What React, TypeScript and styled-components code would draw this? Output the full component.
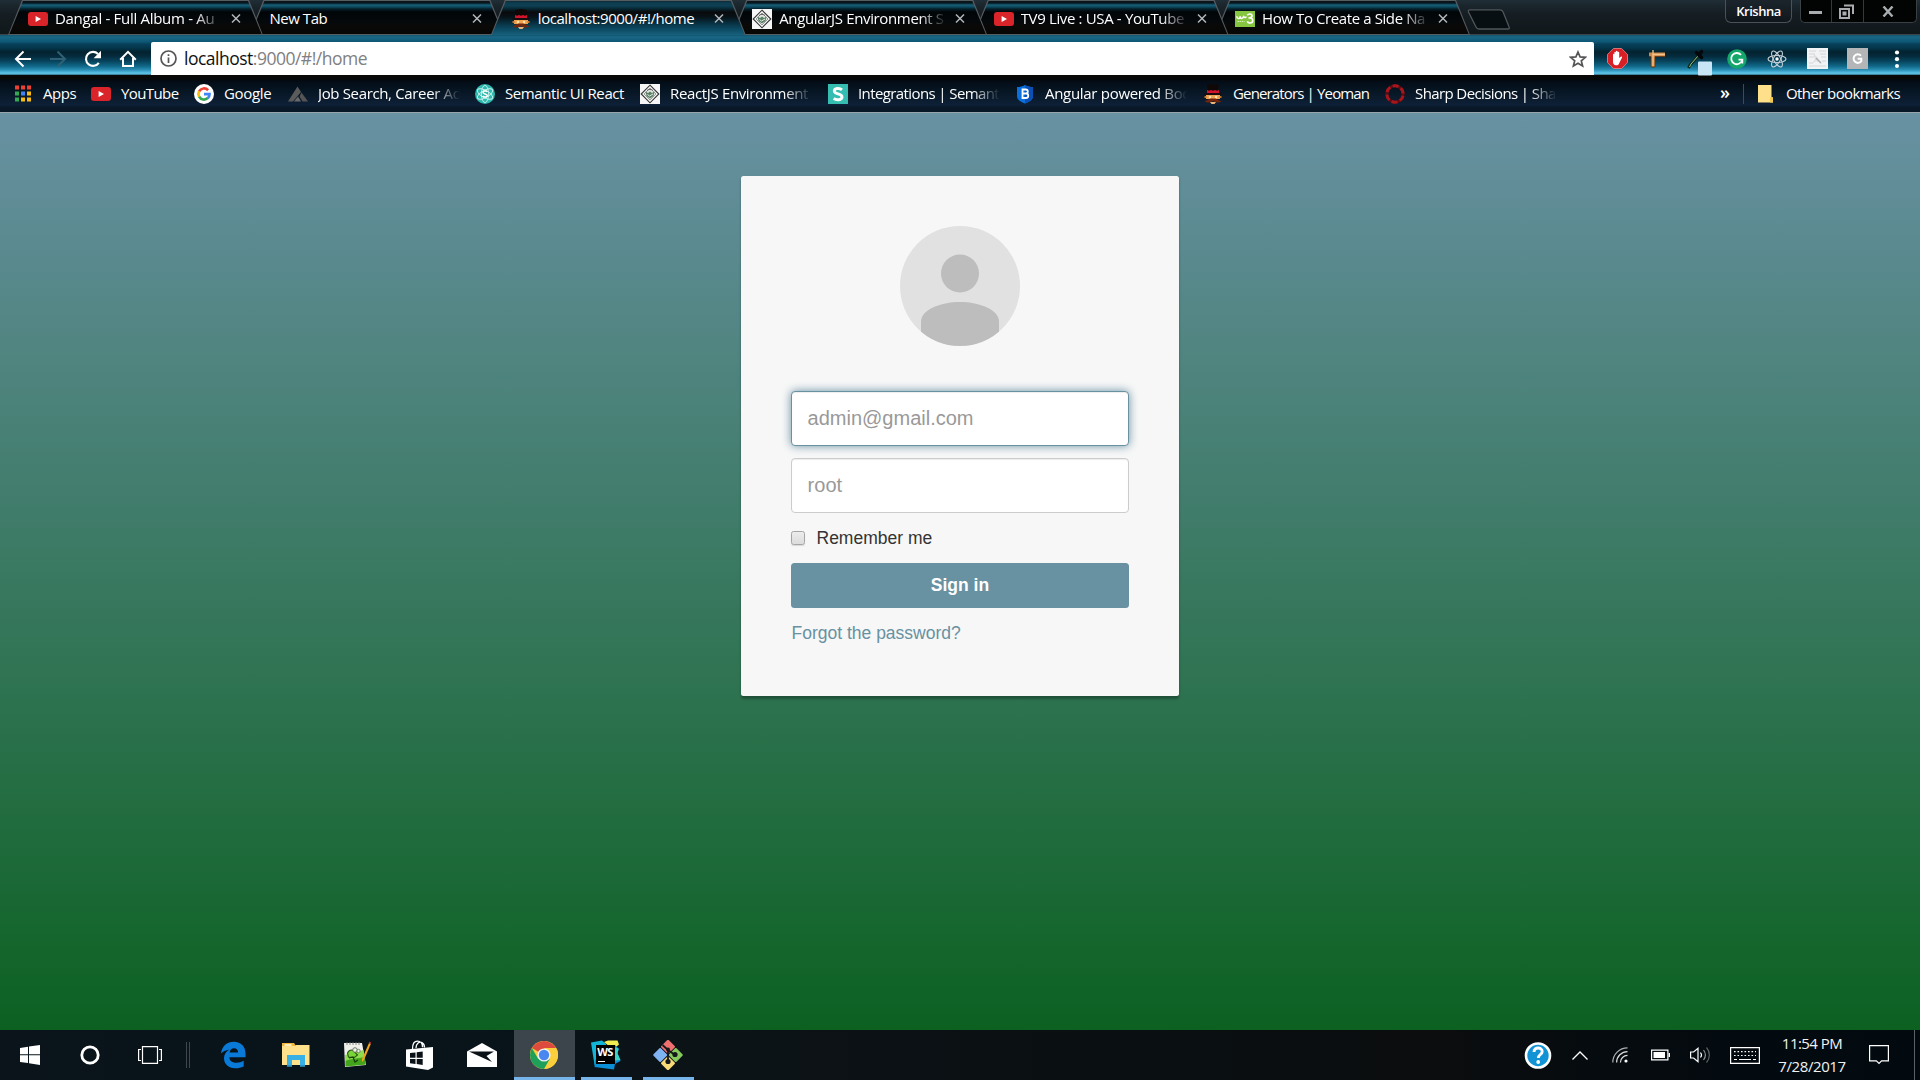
import React from "react";
import styled, { createGlobalStyle, css } from "styled-components";

const GlobalStyle = createGlobalStyle`
  * { box-sizing: border-box; }
  html, body { margin: 0; padding: 0; }
  body { overflow: hidden; background: #0a1218; }
  svg { display: block; flex: none; }
`;

const uiFont = `"Segoe UI", "Open Sans", "Noto Sans", sans-serif`;
const pageFont = `Arial, "Liberation Sans", sans-serif`;

const Screen = styled.div`
  width: 1920px;
  height: 1080px;
  display: flex;
  flex-direction: column;
  font-family: ${uiFont};
  color: #fff;
`;

/* ---------- tab strip ---------- */

const TabStrip = styled.div`
  height: 35px;
  flex: none;
  display: flex;
  align-items: flex-start;
  padding-left: 8px;
  background: linear-gradient(#202e37 0, #1a252c 6px, #161e23 14px, #10171b 35px);
  position: relative;
  box-shadow: inset 0 -1px 0 #3d4447;
`;

const Tab = styled.div<{ $active?: boolean; $z: number }>`
  width: 255px;
  height: 35px;
  flex: none;
  margin-right: -13.6px;
  position: relative;
  z-index: ${(p) => p.$z};
  display: flex;
  align-items: center;
  gap: 7px;
  padding: 3px 21px 0 20px;
  background: #565c60;
  clip-path: polygon(14px 0, 241px 0, 255px 35px, 0 35px);

  &::before {
    content: "";
    position: absolute;
    inset: 0;
    z-index: -1;
    clip-path: ${(p) =>
      p.$active
        ? "polygon(15px 1px, 240px 1px, 254px 35px, 1px 35px)"
        : "polygon(15px 1px, 240px 1px, 253.6px 34px, 1.4px 34px)"};
    background: ${(p) =>
      p.$active
        ? "linear-gradient(#10222b 0, #0c3d50 3px, #0e3f52 6px, #072632 9px, #0a0a0c 12px, #071218 17px, #083040 23px, #0c4a62 29px, #17607c 35px)"
        : "linear-gradient(#0b1419 0, #07161d 3px, #17607a 5px, #0d475d 7px, #051f2a 9px, #010507 12px, #05090b 22px, #0a0907 26px, #060606 35px)"};
  }
`;

const fade = css`
  mask-image: linear-gradient(90deg, #000 calc(100% - 28px), transparent 100%);
`;

const TabTitle = styled.span<{ $fade?: boolean; $ls?: number }>`
  flex: 1;
  min-width: 0;
  white-space: nowrap;
  font-size: 15px;
  line-height: 22px;
  margin-top: -2px;
  letter-spacing: ${(p) => p.$ls ?? -0.35}px;
  ${(p) => p.$fade && fade}
`;

const CloseX = () => (
  <svg width="12" height="12" viewBox="0 0 12 12" stroke="#b4b8ba" strokeWidth="1.5">
    <path d="M2 1.500 10 9.500M10 1.500 2 9.500" />
  </svg>
);

const NewTab = styled.svg`
  margin: 9px 0 0 11px;
`;

const WindowArea = styled.div`
  position: absolute;
  top: 0;
  right: 3px;
  display: flex;
  gap: 8px;
`;

const UserChip = styled.div`
  width: 67px;
  height: 23px;
  border: 1px solid #4a5258;
  border-top: 0;
  border-radius: 0 0 6px 6px;
  background: linear-gradient(#1c252c, #10171c);
  font-size: 13px;
  font-weight: 600;
  letter-spacing: -0.5px;
  line-height: 22px;
  text-align: center;
`;

const Controls = styled.div`
  width: 117px;
  height: 23px;
  display: grid;
  grid-template-columns: 30px 32px 1fr;
  border: 1px solid #394147;
  border-top: 0;
  border-radius: 0 0 5px 5px;
  background: #020303;
`;

const Control = styled.div<{ $shift?: number }>`
  display: flex;
  align-items: center;
  justify-content: center;
  padding-right: ${(p) => p.$shift ?? 0}px;
  & + & {
    border-left: 1px solid #33393e;
  }
`;

/* ---------- toolbar ---------- */

const Toolbar = styled.div`
  height: 40px;
  flex: none;
  display: flex;
  align-items: center;
  padding-left: 5px;
  background: linear-gradient(
    #0f5570 0,
    #1a6884 2px,
    #14617f 4px,
    #0c5674 7px,
    #07405a 9px,
    #04364b 13px,
    #03222f 17px,
    #052a3b 21px,
    #07435c 26px,
    #0f6686 31px,
    #2b90b5 35px,
    #5cc2e6 38px,
    #57b9db 39px,
    #2b5465 40px
  );
`;

const ToolButton = styled.div<{ $w?: number }>`
  width: ${(p) => p.$w ?? 35}px;
  height: 40px;
  flex: none;
  display: flex;
  align-items: center;
  justify-content: center;
  padding-top: 7px;
`;

const AddressBar = styled.div`
  width: 1443px;
  height: 33px;
  flex: none;
  align-self: flex-end;
  margin: 0 3px 0 6px;
  display: flex;
  align-items: center;
  padding: 0 7px 0 9px;
  gap: 8px;
  background: #fff;
  border-radius: 2px 2px 0 0;
`;

const Url = styled.span`
  flex: 1;
  font-size: 17.5px;
  line-height: 32px;
  margin: -2px 0 0 -1px;
  letter-spacing: -0.5px;
  color: #808080;
  b {
    font-weight: 400;
    color: #111;
  }
`;

/* ---------- bookmarks ---------- */

const Bookmarks = styled.div`
  height: 38px;
  flex: none;
  display: flex;
  align-items: center;
  padding: 0 19px 0 13px;
  background: linear-gradient(#0a0907 0, #070809 4px, #030d17 7px, #061522 15px, #0c1c2f 24px, #0d2036 30px, #091928 32px, #071725 37px);
  border-bottom: 1px solid #9aa5ab;
`;

const Bookmark = styled.div<{ $w: number }>`
  width: ${(p) => p.$w}px;
  flex: none;
  display: flex;
  align-items: center;
  gap: 10px;
`;

const BookmarkLabel = styled.span<{ $fade?: boolean; $ls?: number }>`
  ${(p) => p.$fade && "width: 142px;"}
  white-space: nowrap;
  font-size: 15px;
  line-height: 22px;
  margin-top: -2px;
  letter-spacing: ${(p) => p.$ls ?? -0.35}px;
  ${(p) => p.$fade && fade}
`;

const Spacer = styled.div`
  flex: 1;
`;

const More = styled.span`
  font-size: 18px;
  font-weight: 600;
  line-height: 20px;
  margin: -4px 13px 0 0;
`;

const Rule = styled.div`
  width: 1px;
  height: 20px;
  margin-right: 13px;
  background: #3d4a57;
`;

/* ---------- page ---------- */

const Page = styled.main`
  flex: 1;
  display: flex;
  justify-content: center;
  align-items: flex-start;
  padding-top: 63px;
  background: linear-gradient(rgb(104, 145, 162), rgb(12, 97, 33));
  font-family: ${pageFont};
`;

const Card = styled.form`
  width: 438px;
  height: 520px;
  padding: 50px;
  display: flex;
  flex-direction: column;
  background: #f7f7f7;
  border-radius: 2.5px;
  box-shadow: 0 2.5px 2.5px rgba(0, 0, 0, 0.3);
`;

const Avatar = styled.svg`
  align-self: center;
  margin-bottom: 45px;
`;

const Field = styled.input<{ $focused?: boolean }>`
  width: 100%;
  height: 55px;
  margin: 0 0 12px;
  padding: 0 15.6px;
  border: 1px solid ${(p) => (p.$focused ? "#6891a2" : "#ccc")};
  border-radius: 4px;
  outline: 0;
  background: #fff;
  font-family: ${pageFont};
  font-size: 20px;
  box-shadow: ${(p) =>
    p.$focused
      ? "inset 0 1px 1px rgba(0,0,0,.075), 0 0 10px rgb(104,145,162)"
      : "inset 0 1px 1px rgba(0,0,0,.075)"};
  &::placeholder {
    color: #999;
    opacity: 1;
  }
`;

const Remember = styled.label`
  display: flex;
  align-items: center;
  gap: 11.5px;
  height: 25px;
  margin: 1px 0 12px;
  font-size: 17.5px;
  color: #333;
`;

const CheckBox = styled.span`
  width: 14px;
  height: 14px;
  margin-top: -2px;
  border: 1px solid #a5a5a5;
  border-radius: 2.5px;
  background: linear-gradient(#ececec, #dcdcdc);
  box-shadow: 0 1px 1px rgba(0, 0, 0, 0.12);
`;

const SignIn = styled.button`
  height: 45px;
  flex: none;
  border: 0;
  border-radius: 3.5px;
  background: rgb(104, 145, 162);
  color: #fff;
  font: 700 17.5px/45px ${pageFont};
  padding: 0;
`;

const Forgot = styled.a`
  margin: 13px 0 0 0.500px;
  font-size: 17.5px;
  line-height: 25px;
  color: rgb(104, 145, 162);
`;

/* ---------- taskbar ---------- */

const Taskbar = styled.footer`
  height: 50px;
  flex: none;
  display: flex;
  background: linear-gradient(90deg, #0a141a 0, #08131a 25%, #0c1316 38%, #0a0f11 60%, #0b0d0e 75%, #050b0f 84%, #020a10 100%);
`;

const TaskCell = styled.div<{ $w: number; $active?: boolean }>`
  width: ${(p) => p.$w}px;
  flex: none;
  display: flex;
  align-items: center;
  justify-content: center;
  ${(p) => p.$active && "background: #3c454b;"}
`;

const RunningCell = styled(TaskCell)<{ $inset: number }>`
  padding-right: 2px;
  background-image: linear-gradient(#76b4ea, #76b4ea);
  background-repeat: no-repeat;
  background-size: calc(100% - ${(p) => p.$inset * 2}px) 3px;
  background-position: 50% 100%;
`;

const Clock = styled.div`
  width: 85px;
  flex: none;
  display: flex;
  flex-direction: column;
  justify-content: center;
  align-items: center;
  padding-right: 1px;
  font-size: 15px;
  line-height: 23px;
  letter-spacing: -0.55px;
  color: #f2f2f2;
  span + span {
    letter-spacing: -0.4px;
  }
`;

const ShowDesktop = styled.div`
  width: 6px;
  margin-left: 11px;
  border-left: 1px solid #5b6165;
`;

/* ---------- icons ---------- */

const YouTube = () => (
  <svg width="20" height="20" viewBox="0 0 20 20">
    <rect x="0" y="3" width="20" height="14" rx="3" fill="#d9252a" />
    <path d="M7.600 7v6l5.400-3z" fill="#fff" />
  </svg>
);

const Yeoman = () => (
  <svg width="20" height="20" viewBox="0 0 20 20">
    <path d="M4 1 10 0l6 1-1 6H5z" fill="#100707" />
    <path d="M4 6l2 .8 2-.8 2 .8 2-.8 2 .8 2-.8v3H4z" fill="#d3142c" />
    <path d="M1.500 9.200h17v1.600h-17z" fill="#1d0b09" />
    <path d="M3 11h14v4H3z" fill="#f0a24e" />
    <path d="M1.500 12h2v2h-2zM16.500 12h2v2h-2z" fill="#c5762e" />
    <circle cx="7" cy="13" r="1.200" fill="#fbe3b4" />
    <circle cx="13" cy="13" r="1.200" fill="#fbe3b4" />
    <path d="M1.500 17c3 0 4-3 8.500-2.500 4.500-.5 5.500 2.500 8.500 2.500-2 2-5.500 2-8.500 0-3 2-6.500 2-8.500 0z" fill="#71250f" />
    <path d="M7 18h6l-1.500 2h-3z" fill="#ecb479" />
  </svg>
);

const Diamond = () => (
  <svg width="20" height="20" viewBox="0 0 20 20">
    <path d="M0 0h20v20H0z" fill="#f6f6f6" />
    <path d="M10 1.200 18.800 10 10 18.800 1.200 10z" fill="none" stroke="#333" strokeWidth="1.100" />
    <path d="M10 4 16 10l-6 6-6-6z" fill="#dfe7e0" stroke="#777" strokeWidth=".7" />
    <path d="M5.500 7.500 8 9l2-1.500L12 9l2.500-1.500L13.500 12 10 14.500 6.500 12z" fill="#5b8166" />
    <path d="m7.500 10.500 2 1.500 3.500-2" fill="none" stroke="#e6efe8" strokeWidth="1" />
    <path d="M7 6.500c2-1.500 4-1.500 6 0" fill="none" stroke="#555" strokeWidth=".9" />
  </svg>
);

const W3 = () => (
  <svg width="20" height="16" viewBox="0 0 20 16" fill="none" stroke="#fff" strokeLinejoin="round">
    <path d="M0 0h20v16H0z" fill="#86c540" stroke="none" />
    <path d="M1.800 5.200c.2 3 2.700 3.200 3.300.6.400 2.500 3.200 2.200 3.500-.6.700 1.800 2 1.800 2.700.3" strokeWidth="1.500" />
    <path d="M12.300 4.200c1.300-1.800 5-1.600 4.700.7-.2 1.600-1.800 2-2.800 2 1.400-.1 3.500.4 3.500 2.600 0 3.200-4.500 3.200-5.500.9" strokeWidth="1.700" />
    <path d="M2.500 10.500h7" stroke="#d9f0bb" strokeDasharray="1.500 .6" />
  </svg>
);

const AppsGrid = () => (
  <svg width="20" height="20" viewBox="0 0 20 20">
    {["#ee3f32", "#ee3f32", "#ee3f32", "#35a853", "#3f83f4", "#f9bb18", "#35a853", "#f9bb18", "#f9bb18"].map((c, i) => (
      <rect key={i} x={2 + (i % 3) * 6} y={1.500 + Math.floor(i / 3) * 6} width="4" height="4" fill={c} />
    ))}
  </svg>
);

const GoogleG = () => (
  <svg width="20" height="20" viewBox="0 0 20 20" fill="none" strokeWidth="2.700">
    <circle cx="10" cy="10" r="10" fill="#fff" />
    <path d="M14.100 6.200A5.600 5.600 0 0 0 5.100 7.400" stroke="#ea4335" />
    <path d="M5.100 7.300a5.600 5.600 0 0 0 0 5.400" stroke="#fbbc05" />
    <path d="M5.100 12.600a5.600 5.600 0 0 0 8.700 1.500" stroke="#34a853" />
    <path d="M10 10.200h5.500c0 1.700-.5 2.900-1.700 4" stroke="#4285f4" />
  </svg>
);

const JobTriangle = () => (
  <svg width="20" height="20" viewBox="0 0 20 20">
    <path d="M9.500 2.500 13 8 5 17.500H0z" fill="#5b5b5b" />
    <path d="m13.500 8.500 6.500 9h-5.500l-3-5z" fill="#555" />
    <path d="m10 12.500 3 5H6z" fill="#6a6a6a" />
  </svg>
);

const SemanticReact = () => (
  <svg width="20" height="20" viewBox="0 0 20 20" fill="none">
    <circle cx="10" cy="10" r="10" fill="#2fb9ae" />
    {[0, 60, 120].map((r) => (
      <ellipse key={r} cx="10" cy="10" rx="8.600" ry="3.600" transform={`rotate(${r + 30} 10 10)`} stroke="#c9f1ed" strokeWidth=".9" />
    ))}
    <path d="M12.300 7.600c-1.500-1.200-4.400-.8-4.300.9.100 1.800 4.200 1 4.300 3 0 1.700-3 2.100-4.700.7" stroke="#fff" strokeWidth="1.500" />
  </svg>
);

const SemanticS = () => (
  <svg width="20" height="20" viewBox="0 0 20 20" fill="none">
    <path d="M0 0h20v20H0z" fill="#35bdb2" />
    <path d="M14 5.800C11.500 3.700 6.300 4 6.300 7c0 3.600 7.700 2 7.700 6 0 3.200-5.600 3.600-8.300 1.400" stroke="#fff" strokeWidth="2.900" />
  </svg>
);

const BootShield = () => (
  <svg width="20" height="20" viewBox="0 0 20 20" fill="none">
    <path d="M10 1c2.500 1.600 5 2 8 2v9c0 4-4 6-8 7.500C6 18 2 16 2 12V3c3 0 5.500-.4 8-2z" fill="#0b6fdc" />
    <path d="M10 1c2.500 1.600 5 2 8 2v9c0 4-4 6-8 7.500z" fill="#0a50b5" />
    <path d="M7.500 5.500h3.200c2.800 0 2.800 4 0 4H7.500h3.500c3 0 3 4.500 0 4.500H7.500z" stroke="#fff" strokeWidth="1.800" />
  </svg>
);

const RedRing = () => (
  <svg width="20" height="20" viewBox="0 0 20 20" fill="none">
    <circle cx="10" cy="10" r="8.200" stroke="#5d0d13" strokeWidth="3" />
    <circle cx="10" cy="10" r="8.200" stroke="#a8161d" strokeWidth="3" strokeDasharray="6 2.590" transform="rotate(12 10 10)" />
  </svg>
);

const Folder = () => (
  <svg width="19" height="20" viewBox="0 0 19 20">
    <path d="M1 1h13.500v13l1.500-1v5.500H1z" fill="#ffe08a" />
    <path d="M13 14c0-1.500 3-1.500 3 0v4.500h-3z" fill="#f3c94f" />
  </svg>
);

const Back = ({ color }: { color: string }) => (
  <svg width="18" height="18" viewBox="0 0 18 18" fill="none" stroke={color} strokeWidth="2">
    <path d="M17 9H2.500M9.500 1.500 2 9l7.500 7.500" />
  </svg>
);

const Forward = ({ color }: { color: string }) => (
  <svg width="18" height="18" viewBox="0 0 18 18" fill="none" stroke={color} strokeWidth="2">
    <path d="M1 9h14.500M8.500 1.500 16 9l-7.500 7.500" />
  </svg>
);

const Reload = () => (
  <svg width="18" height="18" viewBox="0 0 18 18" fill="none">
    <path d="M14.800 12.800A7 7 0 1 1 14 4" stroke="#fff" strokeWidth="2.100" />
    <path d="M17 .8v7.400H9.600z" fill="#fff" />
  </svg>
);

const Home = () => (
  <svg width="18" height="18" viewBox="0 0 18 18" fill="none" stroke="#fff" strokeWidth="2">
    <path d="M1.200 9.800 9 1.900l7.800 7.900M4 8v8h10V8" />
  </svg>
);

const Info = () => (
  <svg width="17" height="17" viewBox="0 0 17 17" fill="none" stroke="#555" strokeWidth="1.700">
    <circle cx="8.500" cy="8.500" r="7.500" />
    <path d="M8.500 7.500V13M8.500 4.200v1.900" />
  </svg>
);

const Star = () => (
  <svg width="18" height="18" viewBox="0 0 18 18" fill="none" stroke="#555" strokeWidth="1.700">
    <path d="m9 2 2.100 4.900 5.200.4-4 3.500 1.300 5.200L9 13.200 4.400 16l1.300-5.200-4-3.500 5.200-.4z" />
  </svg>
);

const StopHand = () => (
  <svg width="21" height="21" viewBox="0 0 21 21">
    <path d="M6.400.5h8.200l5.900 5.900v8.200l-5.900 5.900H6.400L.5 14.600V6.400z" fill="#d91f26" stroke="#e88" strokeWidth=".8" />
    <path d="M6 12V6.500c0-1 1.400-1 1.400 0V4.500c0-1.100 1.500-1.100 1.500 0v-1c0-1.100 1.700-1.100 1.700 0v1c0-1 1.600-1 1.600 0V10l1.600-1.300c.9-.6 1.700.3 1 1.200l-3 6c-.6 1-1.200 1.300-2.200 1.300H9c-2 0-3-1.600-3-3z" fill="#fff" />
  </svg>
);

const Ruler = () => (
  <svg width="18" height="18" viewBox="0 0 18 18">
    <path d="M1 2.500h16v4H7V17H3V6.500H1z" fill="#cf8a4a" />
    <path d="M5 0v4.500h12M5 4.500V16" fill="none" stroke="#f3c48c" strokeWidth="1.300" />
    <path d="M1 6.500h2V17h4V6.500h10" fill="none" stroke="#653510" strokeWidth=".8" />
  </svg>
);

const DropperArt = styled.svg`
  position: relative;
  left: 2px;
  top: 3px;
`;

const Dropper = () => (
  <DropperArt width="28" height="28" viewBox="0 0 28 28">
    <path d="m14 7-9 10-1.500 3" stroke="#12281a" strokeWidth="3" fill="none" />
    <path d="m13 8-7 8-1.500 3" stroke="#8fc388" strokeWidth="1" fill="none" />
    <path d="m11.500 4.500 5 5M14 7.500l2.500-4" stroke="#05070a" strokeWidth="3.500" strokeLinecap="round" />
    <rect x="13" y="13.500" width="14" height="14" rx="1" fill="#c8e6f5" />
  </DropperArt>
);

const Grammarly = () => (
  <svg width="20" height="20" viewBox="0 0 20 20" fill="none">
    <circle cx="10" cy="10" r="9.800" fill="#15a66b" />
    <path d="M14 5.900a5.600 5.600 0 1 0 1.300 4.800h-3.800M15.300 10.500v4" stroke="#fff" strokeWidth="1.800" />
  </svg>
);

const ReactAtom = () => (
  <svg width="20" height="20" viewBox="0 0 20 20" fill="none">
    {[0, 60, 120].map((r) => (
      <ellipse key={r} cx="10" cy="10" rx="9" ry="3.500" transform={`rotate(${r} 10 10)`} stroke="#c5d0d6" strokeWidth="1.100" />
    ))}
    <circle cx="10" cy="10" r="1.700" fill="#fff" />
  </svg>
);

const NewsDoc = () => (
  <svg width="21" height="21" viewBox="0 0 21 21">
    <path d="M0 0h21v21H0z" fill="#f1f3f4" />
    <path d="M2 3h7M2 6h6M2 9h5M12 3h7M13 6h6M14 9h5M2 15h4M2 18h17M15 13h4" stroke="#d3d6d8" strokeWidth="1" />
    <path d="m6 5 5 5 4 6-6-3-4 3 3-5z" fill="#dcdfe0" />
    <path d="m9 10 5 5" stroke="#a9aeb0" strokeWidth="1.200" />
  </svg>
);

const GreyG = () => (
  <svg width="21" height="21" viewBox="0 0 21 21" fill="none">
    <path d="M0 0h21v21H0z" fill="#b3b5b7" />
    <path d="M14 7.600a4.300 4.300 0 1 0 .3 5.600v-2.500h-3.600" stroke="#fff" strokeWidth="2" />
  </svg>
);

const Dots = () => (
  <svg width="6" height="18" viewBox="0 0 6 18" fill="#fff">
    <circle cx="3" cy="2.500" r="2.100" />
    <circle cx="3" cy="9.200" r="2.100" />
    <circle cx="3" cy="16" r="2" />
  </svg>
);

const WindowsLogo = () => (
  <svg width="20" height="20" viewBox="0 0 20 20" fill="#fff">
    <path d="M0 2.900 8 1.700v7.500H0zM9 1.500 20 0v9.200H9zM0 10.200h8v7.900l-8-1.200zM9 10.200h11V20L9 18.300z" />
  </svg>
);

const Cortana = () => (
  <svg width="20" height="20" viewBox="0 0 20 20" fill="none">
    <circle cx="10" cy="10" r="8.200" stroke="#fff" strokeWidth="2.800" />
  </svg>
);

const TaskView = () => (
  <svg width="24" height="18" viewBox="0 0 24 18" fill="none" stroke="#fff" strokeWidth="1.200">
    <path d="M4.500.6h15v16.800h-15zM3 3.500H.6v11H3M21 3.500h2.400v11H21" />
  </svg>
);

const Divider = () => (
  <svg width="4" height="26" viewBox="0 0 4 26" stroke="#3f474c">
    <path d="M.5 0v26M3.500 0v26" />
  </svg>
);

const Edge = () => (
  <svg width="25" height="28" viewBox="0 0 25 28">
    <path
      d="M0 12.500C1 5 6 .8 12.800.8 20 .8 24.500 5.800 24.500 12.500v3.800H8.300c.2 3.800 3.300 5.500 7.300 5.500 2.700 0 5-.7 7.100-2v5.400c-2.300 1.400-5.200 2-8.400 2C7.200 27.200 3 22.800 3 17.200c0-3.900 2.200-7 5.600-8.700-4 .6-6.900 2.300-8.600 4zM8.500 11.500h8.600c0-2.700-1.500-4.300-4.100-4.300-2.300 0-3.900 1.500-4.500 4.300z"
      fill="#0a7ad9"
      fillRule="evenodd"
    />
  </svg>
);

const Explorer = () => (
  <svg width="28" height="24" viewBox="0 0 28 24">
    <path d="M0 0h12l2 3H0z" fill="#f0b93a" />
    <path d="M0 3h13l1-1h13.500v20H0z" fill="#ffe18c" />
    <path d="M2.500 1.200h7v1.600h-7z" fill="#fff8dc" />
    <path d="M5 12h18v11.500h-5V17h-8v6.500H5z" fill="#37b0e6" />
    <path d="M5 22h5v1.500H5zM18 22h5v1.500h-5z" fill="#2d8fc4" />
  </svg>
);

const Notepad = () => (
  <svg width="28" height="28" viewBox="0 0 28 28">
    <path d="M1 2h18l4 22-21 2z" fill="#eef0ea" />
    <path d="M2 14 20.500 9l2 14.500L2.500 25.500z" fill="#8fdc4c" />
    <path d="M2.500 20c6-3 12-2 19.300-4l.8 7.500L2.500 25.500z" fill="#43a51c" />
    <path d="M4 1.500v2.500M7 1.500v2.500M10 1.500v2.500M13 1.500v2.500M16 1.500v2.500" stroke="#999" strokeWidth="1.200" />
    <path d="M4.500 12c2-4 6-4 8 0l2 2-3 2.500-6-.5z" fill="#7ad636" stroke="#275c12" strokeWidth="1.100" />
    <circle cx="12" cy="9" r="2.300" fill="#e9f6df" stroke="#666" strokeWidth=".9" />
    <circle cx="15.500" cy="10" r="1.700" fill="#e9f6df" stroke="#666" strokeWidth=".8" />
    <path d="m6 17 4-1 2 5 3-2" fill="none" stroke="#173d0c" strokeWidth="1.200" />
    <path d="m26 2 1.800 1L21 19l-2 2v-3z" fill="#f0a321" />
    <path d="m26 2 1.800 1 .2-1.500-1.500-.9z" fill="#c8372c" />
  </svg>
);

const Store = () => (
  <svg width="27" height="30" viewBox="0 0 27 30">
    <path d="M6.500 9C6.500 4 8.500 1.200 11.500 1.200c3.200 0 5 2.800 5 6M10 8c0-4 3-6.800 6-5.400 1.600.8 2.500 2.500 2.500 5" fill="none" stroke="#fff" strokeWidth="1.300" />
    <path d="m0 9.500 27-2.500v20.500L22 30 0 26.500z" fill="#fff" />
    <path d="m4 13 5.500-.6v5.300H4zM10.700 12.200l6-.7v6.200h-6zM4 18.900h5.500v5.200L4 23.300zM10.700 18.900h6v6l-6-.8z" fill="#0a1218" />
  </svg>
);

const Mail = () => (
  <svg width="30" height="24" viewBox="0 0 30 24">
    <path d="M0 8.500 15 0l15 8.500V24H0z" fill="#fff" />
    <path d="M2 8.500h25l-7.500 4.500L25 19z" fill="#0a1218" />
  </svg>
);

const Chrome = () => (
  <svg width="28" height="28" viewBox="0 0 28 28">
    <circle cx="14" cy="14" r="14" fill="#fbce3c" />
    <path d="M14 14 1.900 7A14 14 0 0 1 26.100 7z" fill="#dd4b3e" />
    <path d="M14 7h12.200A14 14 0 0 1 14.300 28L20 17.500z" fill="#fbce3c" />
    <path d="M1.900 7A14 14 0 0 0 14 28l6-10.500-12 0z" fill="#1fa05a" />
    <circle cx="14" cy="14" r="6.600" fill="#f3f3f3" />
    <circle cx="14" cy="14" r="5.200" fill="#4a87ee" />
  </svg>
);

const WebStormBox = styled.div`
  width: 30px;
  height: 30px;
  position: relative;
  span {
    position: absolute;
    left: 5px;
    top: 5px;
    width: 19px;
    height: 19px;
    background: #000;
    font: 700 11px/14px "Open Sans", sans-serif;
    letter-spacing: -0.6px;
    text-align: center;
  }
  span::after {
    content: "";
    position: absolute;
    left: 2px;
    bottom: 2px;
    width: 7px;
    height: 1.5px;
    background: #fff;
  }
`;

const WebStorm = () => (
  <WebStormBox>
    <svg width="30" height="30" viewBox="0 0 30 30">
      <path d="M0 2.500 11 .5l4 3.500-1 18-10.500 3z" fill="#12b5d8" />
      <path d="M13 2 17 .5h9.500l1.500 4-6 5z" fill="#f1ec50" />
      <path d="M4 20 24 5l4 4-1.500 4 3 8-5.500 3-1 5.500L3.500 27z" fill="#0a8fd6" />
      <path d="m23 7 4.500 1.500-1 5 3 6.500-5.500.5z" fill="#3ad3c8" />
    </svg>
    <span>WS</span>
  </WebStormBox>
);

const GitIcon = () => (
  <svg width="30" height="30" viewBox="0 0 30 30">
    <rect x="9.800" y="1.500" width="10.400" height="10.400" rx="1" transform="rotate(45 15 6.700)" fill="#f07070" />
    <rect x="2" y="9.800" width="10.400" height="10.400" rx="1" transform="rotate(45 7.200 15)" fill="#80b3f2" />
    <rect x="17.600" y="9.800" width="10.400" height="10.400" rx="1" transform="rotate(45 22.800 15)" fill="#88c95e" />
    <rect x="9.800" y="18.100" width="10.400" height="10.400" rx="1" transform="rotate(45 15 23.300)" fill="#f9dc78" />
    <path d="m9.500 5 5.500 5v12M15 10l7 5" fill="none" stroke="#16191b" strokeWidth="1.800" />
    <circle cx="15" cy="9.500" r="2" fill="#16191b" />
    <circle cx="22" cy="14.500" r="2.600" fill="#16191b" />
    <circle cx="15" cy="21.500" r="2.600" fill="#16191b" />
  </svg>
);

const Help = () => (
  <svg width="28" height="28" viewBox="0 0 28 28" fill="none">
    <circle cx="14" cy="14.500" r="12" fill="#1193d6" stroke="#fff" strokeWidth="2.600" />
    <path d="M10 11c0-5.500 8.200-5 8.200-.6 0 3-3.900 3.200-3.900 6.600" stroke="#fff" strokeWidth="2.900" />
    <circle cx="14.200" cy="21" r="1.900" fill="#fff" />
  </svg>
);

const Chevron = () => (
  <svg width="16" height="9" viewBox="0 0 16 9" fill="none" stroke="#fff" strokeWidth="1.300">
    <path d="M.5 8.500 8 1l7.500 7.500" />
  </svg>
);

const Wifi = () => (
  <svg width="16" height="16" viewBox="0 0 16 16" fill="none" strokeWidth="1.200">
    <path d="M.8 15.500A14.700 14.700 0 0 1 15.500.8" stroke="#aeb2b4" />
    <path d="M4.600 15.500A10.900 10.900 0 0 1 15.500 4.600M8.400 15.500a7.100 7.100 0 0 1 7.100-7.100" stroke="#ddd" />
    <circle cx="14" cy="14" r="1.600" fill="#fff" />
  </svg>
);

const Battery = () => (
  <svg width="19" height="12" viewBox="0 0 19 12" fill="none">
    <path d="M.6 1.100h16.300v9.800H.6z" stroke="#fff" strokeWidth="1.200" />
    <path d="M2.500 3h11.500v6H2.500z" fill="#fff" />
    <path d="M18.300 4v4" stroke="#fff" strokeWidth="1.400" />
  </svg>
);

const Speaker = () => (
  <svg width="21" height="18" viewBox="0 0 21 18" fill="none" strokeWidth="1.200">
    <path d="M.6 6h3L8 2.200v13.600L3.600 12h-3z" stroke="#fff" />
    <path d="M10.500 6.500c1.200 1.500 1.200 3.500 0 5" stroke="#fff" />
    <path d="M13.500 4c2.300 3 2.300 7 0 10" stroke="#8d9193" />
    <path d="M16.500 1.500c3.800 4.300 3.800 10.700 0 15" stroke="#5c6164" />
  </svg>
);

const Keyboard = () => (
  <svg width="30" height="17" viewBox="0 0 30 17" fill="none" stroke="#fff" strokeWidth="1.200">
    <path d="M.6.600h28.800v15.800H.6z" />
    <path d="M4 4.700h22M4 8.500h22" strokeDasharray="1.600 1.900" />
    <path d="M4 12.500h3M9 12.500h12M23 12.500h3" />
  </svg>
);

const Notification = () => (
  <svg width="20" height="20" viewBox="0 0 20 20" fill="none" stroke="#fff" strokeWidth="1.200">
    <path d="M.6.600h18.800v15.300h-6.800L10 18.500l-2.600-2.600H.6z" />
  </svg>
);

/* ---------- data ---------- */

type TabItem = { title: string; icon?: React.ReactNode; active?: boolean; fade?: boolean; ls?: number };

const tabs: TabItem[] = [
  { title: "Dangal - Full Album - Au", icon: <YouTube />, fade: true, ls: -0.3 },
  { title: "New Tab", ls: -0.45 },
  { title: "localhost:9000/#!/home", icon: <Yeoman />, active: true, ls: -0.45 },
  { title: "AngularJS Environment S", icon: <Diamond />, fade: true },
  { title: "TV9 Live : USA - YouTube", icon: <YouTube />, fade: true, ls: -0.35 },
  { title: "How To Create a Side Na", icon: <W3 />, fade: true, ls: -0.4 },
];

type BookmarkItem = { label: string; icon: React.ReactNode; w: number; fade?: boolean; ls?: number };

const bookmarks: BookmarkItem[] = [
  { label: "Apps", icon: <AppsGrid />, w: 78, ls: -0.45 },
  { label: "YouTube", icon: <YouTube />, w: 103, ls: -0.6 },
  { label: "Google", icon: <GoogleG />, w: 94, ls: -0.35 },
  { label: "Job Search, Career Ad", icon: <JobTriangle />, w: 187, fade: true, ls: -0.35 },
  { label: "Semantic UI React", icon: <SemanticReact />, w: 165, ls: -0.4 },
  { label: "ReactJS Environment", icon: <Diamond />, w: 188, fade: true, ls: -0.35 },
  { label: "Integrations | Semant", icon: <SemanticS />, w: 187, fade: true, ls: -0.6 },
  { label: "Angular powered Boo", icon: <BootShield />, w: 188, fade: true, ls: -0.3 },
  { label: "Generators | Yeoman", icon: <Yeoman />, w: 182, ls: -0.85 },
  { label: "Sharp Decisions | Sha", icon: <RedRing />, w: 187, fade: true, ls: -0.6 },
];

const extensions = [StopHand, Ruler, Dropper, Grammarly, ReactAtom, NewsDoc, GreyG, Dots];

export default function App() {
  return (
    <Screen>
      <GlobalStyle />
      <TabStrip>
        {tabs.map((t, i) => (
          <Tab key={t.title} $active={t.active} $z={t.active ? 20 : 10 - i}>
            {t.icon}
            <TabTitle $fade={t.fade} $ls={t.ls}>{t.title}</TabTitle>
            <CloseX />
          </Tab>
        ))}
        <NewTab width="44" height="22" viewBox="0 0 44 22">
          <path d="M3 .8h30q2 0 3 2l6 15q1 2.200-1 2.200H12q-2 0-3-2L1.500 3Q1 .8 3 .8z" fill="#080f13" stroke="#50575b" strokeWidth="1.300" />
        </NewTab>
        <WindowArea>
          <UserChip>Krishna</UserChip>
          <Controls>
            <Control>
              <svg width="14" height="5" viewBox="0 0 14 5"><path d="M0 2h13v3H0z" fill="#a9adaf" /></svg>
            </Control>
            <Control $shift={3}>
              <svg width="15" height="15" viewBox="0 0 15 15" fill="none" stroke="#a9adaf" strokeWidth="2">
                <path d="M1 5h9v9H1zM5 1.500h9V10M4.500 8.500h2v2h-2z" />
              </svg>
            </Control>
            <Control $shift={4}>
              <svg width="12" height="11" viewBox="0 0 12 11" stroke="#a9adaf" strokeWidth="2.400">
                <path d="m1.500.5 9 10M10.500.5l-9 10" />
              </svg>
            </Control>
          </Controls>
        </WindowArea>
      </TabStrip>

      <Toolbar>
        <ToolButton><Back color="#fff" /></ToolButton>
        <ToolButton><Forward color="#2f6073" /></ToolButton>
        <ToolButton><Reload /></ToolButton>
        <ToolButton><Home /></ToolButton>
        <AddressBar>
          <Info />
          <Url><b>localhost</b>:9000/#!/home</Url>
          <Star />
        </AddressBar>
        {extensions.map((Icon, i) => (
          <ToolButton key={i} $w={40}><Icon /></ToolButton>
        ))}
      </Toolbar>

      <Bookmarks>
        {bookmarks.map((b) => (
          <Bookmark key={b.label} $w={b.w}>
            {b.icon}
            <BookmarkLabel $fade={b.fade} $ls={b.ls}>{b.label}</BookmarkLabel>
          </Bookmark>
        ))}
        <Spacer />
        <More>»</More>
        <Rule />
        <Bookmark $w={144}>
          <Folder />
          <BookmarkLabel $ls={-0.6}>Other bookmarks</BookmarkLabel>
        </Bookmark>
      </Bookmarks>

      <Page>
        <Card>
          <Avatar width="120" height="120" viewBox="0 0 120 120">
            <defs>
              <clipPath id="avatar-clip"><circle cx="60" cy="60" r="60" /></clipPath>
            </defs>
            <g clipPath="url(#avatar-clip)">
              <path d="M0 0h120v120H0z" fill="#e1e1e1" />
              <circle cx="60" cy="47.500" r="19" fill="#bdbdbd" />
              <path d="M21 120V95.500C21 84 40 76 60 76s39 8 39 19.500V120z" fill="#bdbdbd" />
            </g>
          </Avatar>
          <Field $focused placeholder="admin@gmail.com" />
          <Field placeholder="root" />
          <Remember><CheckBox />Remember me</Remember>
          <SignIn type="button">Sign in</SignIn>
          <Forgot>Forgot the password?</Forgot>
        </Card>
      </Page>

      <Taskbar>
        <TaskCell $w={60}><WindowsLogo /></TaskCell>
        <TaskCell $w={60}><Cortana /></TaskCell>
        <TaskCell $w={60}><TaskView /></TaskCell>
        <TaskCell $w={16}><Divider /></TaskCell>
        <TaskCell $w={7} />
        <TaskCell $w={61}><Edge /></TaskCell>
        <TaskCell $w={63}><Explorer /></TaskCell>
        <TaskCell $w={60}><Notepad /></TaskCell>
        <TaskCell $w={64}><Store /></TaskCell>
        <TaskCell $w={62}><Mail /></TaskCell>
        <TaskCell $w={1} />
        <RunningCell $w={61} $inset={0} $active><Chrome /></RunningCell>
        <RunningCell $w={63} $inset={6}><WebStorm /></RunningCell>
        <RunningCell $w={61} $inset={5}><GitIcon /></RunningCell>
        <Spacer />
        <TaskCell $w={44}><Help /></TaskCell>
        <TaskCell $w={40}><Chevron /></TaskCell>
        <TaskCell $w={40}><Wifi /></TaskCell>
        <TaskCell $w={40}><Battery /></TaskCell>
        <TaskCell $w={40}><Speaker /></TaskCell>
        <TaskCell $w={50}><Keyboard /></TaskCell>
        <Clock><span>11:54 PM</span><span>7/28/2017</span></Clock>
        <TaskCell $w={48}><Notification /></TaskCell>
        <ShowDesktop />
      </Taskbar>
    </Screen>
  );
}
